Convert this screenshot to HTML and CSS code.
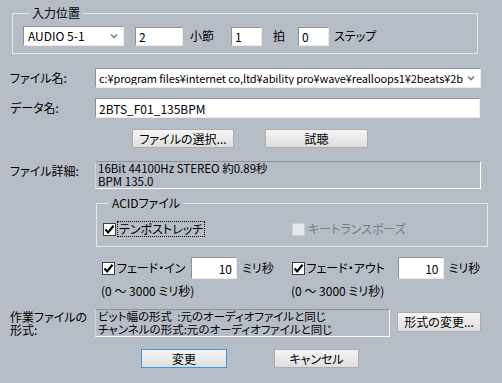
FILE: index.html
```html
<!DOCTYPE html>
<html lang="ja">
<head>
    <meta charset="UTF-8">
    <title>ファイルの挿入</title>
    <link rel="stylesheet" href="styles.css">
</head>
<body>
    <!-- 入力位置 -->
    <fieldset class="group group-pos">
        <legend>入力位置</legend>
        <div class="pos-row">
            <div class="select select-track">
                <span class="select-value">AUDIO 5-1</span>
                <svg class="chevron" width="8" height="6" viewBox="0 0 8 6"><path d="M1 1.5 L4 4.5 L7 1.5" fill="none" stroke="#7c8187" stroke-width="1.6"/></svg>
            </div>
            <input class="field field-bar" type="text" value="2">
            <span class="unit unit-bar">小節</span>
            <input class="field field-beat" type="text" value="1">
            <span class="unit unit-beat">拍</span>
            <input class="field field-step" type="text" value="0">
            <span class="unit">ステップ</span>
        </div>
    </fieldset>

    <!-- ファイル名 / データ名 -->
    <div class="row row-file">
        <label class="row-label">ファイル名:</label>
        <div class="select select-file">
            <span class="select-value">c:¥program files¥internet co,ltd¥ability pro¥wave¥realloops1¥2beats¥2b</span>
            <svg class="chevron" width="8" height="6" viewBox="0 0 8 6"><path d="M1 1.5 L4 4.5 L7 1.5" fill="none" stroke="#7c8187" stroke-width="1.6"/></svg>
        </div>
    </div>
    <div class="row row-data">
        <label class="row-label">データ名:</label>
        <input class="field field-data" type="text" value="2BTS_F01_135BPM">
    </div>

    <div class="row row-actions">
        <button class="btn btn-browse">ファイルの選択...</button>
        <button class="btn btn-listen">試聴</button>
    </div>

    <!-- ファイル詳細 -->
    <div class="row row-detail">
        <label class="row-label">ファイル詳細:</label>
        <div class="info info-detail">16Bit 44100Hz STEREO 約0.89秒<br>BPM 135.0</div>
    </div>

    <fieldset class="group group-acid">
        <legend>ACIDファイル</legend>
        <div class="acid-row">
            <span class="check-col">
                <span class="check is-checked"><svg width="11" height="11" viewBox="0 0 11 11"><path d="M1.5 5.5 L4.2 8.4 L9.5 1.8" fill="none" stroke="#000" stroke-width="2.2"/></svg></span>
                <span class="check-text focused">テンポストレッチ</span>
            </span>
            <span class="check-col disabled">
                <span class="check is-disabled"></span>
                <span class="check-text">キートランスポーズ</span>
            </span>
        </div>
    </fieldset>

    <!-- フェード -->
    <div class="row row-fade">
        <div class="fade-col">
            <span class="check is-checked"><svg width="11" height="11" viewBox="0 0 11 11"><path d="M1.5 5.5 L4.2 8.4 L9.5 1.8" fill="none" stroke="#000" stroke-width="2.2"/></svg></span>
            <span class="check-text fade-name">フェード・イン</span>
            <input class="field field-ms" type="text" value="10">
            <span class="unit">ミリ秒</span>
        </div>
        <div class="fade-col">
            <span class="check is-checked"><svg width="11" height="11" viewBox="0 0 11 11"><path d="M1.5 5.5 L4.2 8.4 L9.5 1.8" fill="none" stroke="#000" stroke-width="2.2"/></svg></span>
            <span class="check-text fade-name">フェード・アウト</span>
            <input class="field field-ms" type="text" value="10">
            <span class="unit">ミリ秒</span>
        </div>
    </div>
    <div class="row row-range">
        <span class="range">(0 〜 3000 ミリ秒)</span>
        <span class="range">(0 〜 3000 ミリ秒)</span>
    </div>

    <!-- 作業ファイルの形式 -->
    <div class="row row-format">
        <label class="row-label format-label">作業ファイルの<br>形式:</label>
        <div class="info info-format">ビット幅の形式&nbsp;&nbsp;:元のオーディオファイルと同じ<br>チャンネルの形式:元のオーディオファイルと同じ</div>
        <button class="btn btn-format">形式の変更...</button>
    </div>

    <div class="row row-footer">
        <button class="btn btn-ok">変更</button>
        <button class="btn btn-cancel">キャンセル</button>
    </div>
</body>
</html>
```

FILE: styles.css
```css
:root {
    --bg: #b6bdc7;
    --group-line: #e3e6eb;
    --sunken: #8e939a;
    --text: #000;
    --muted: #767c84;
    --font: "Noto Sans CJK JP", "Noto Sans", sans-serif;
}

* {
    box-sizing: border-box;
    margin: 0;
    padding: 0;
}

body {
    width: 502px;
    height: 383px;
    overflow: hidden;
    padding: 6px 21px 0 10px;
    background: var(--bg);
    color: var(--text);
    font-family: var(--font);
    font-size: 12px;
    line-height: 14px;
    font-feature-settings: "palt";
}

/* Group boxes */
.group {
    border: 1px solid var(--group-line);
}

.group legend {
    line-height: 14px;
    padding: 0 3px;
    margin-left: 6px;
    font-size: 12px;
}

.group-pos {
    margin: 0 3px 0 2px;
    padding: 6px 10px 7px;
}

.pos-row {
    display: flex;
    align-items: center;
    height: 20px;
}

/* Inputs */
.field {
    height: 19px;
    border: 1px solid #e9ebee;
    border-top-color: var(--sunken);
    border-left-color: var(--sunken);
    background: #fff;
    font-family: var(--font);
    font-size: 12px;
    padding: 0 3px;
    color: var(--text);
    outline: none;
}

.select {
    display: flex;
    align-items: center;
    height: 20px;
    background: #fff;
    border: 1px solid #e9ebee;
    border-top-color: var(--sunken);
    border-left-color: var(--sunken);
    padding: 0 5px 0 3px;
}

.select-value {
    flex: 1;
    white-space: nowrap;
}

.chevron {
    flex: none;
    margin-left: 4px;
}

.select-track {
    width: 101px;
    margin-right: 11px;
    padding-left: 4px;
}

.select-file .select-value {
    font-size: 11px;
    letter-spacing: -0.1px;
    overflow: hidden;
}

.field-bar { width: 48px; }
.field-beat { width: 31px; }
.field-step { width: 31px; }

.unit-bar { margin: 0 17px 0 7px; }
.unit-beat { margin: 0 13px 0 11px; }
.field-step + .unit { margin-left: 5px; }

/* Label rows */
.row {
    display: flex;
    align-items: center;
}

.row-label {
    width: 85px;
    flex: none;
}

.row-file { margin-top: 14px; }
.select-file { width: 386px; }

.row-data { margin-top: 10px; }
.field-data { width: 385px; height: 20px; }

.row-actions {
    margin-top: 11px;
    padding-left: 122px;
    gap: 31px;
}

/* Buttons */
.btn {
    height: 19px;
    border: 1px solid #adadad;
    background: linear-gradient(#f5f5f5, #dedede);
    font-family: var(--font);
    font-size: 12px;
    line-height: 14px;
    color: var(--text);
    font-feature-settings: "palt";
}

.btn-browse { width: 102px; }
.btn-listen { width: 103px; }

/* Info boxes */
.info {
    border: 1px solid #fff;
    border-top-color: var(--sunken);
    border-left-color: #d2d6dc;
    font-size: 11.5px;
    line-height: 13px;
    padding: 0 2px;
    white-space: nowrap;
    overflow: hidden;
}

.row-detail {
    margin-top: 13px;
    align-items: flex-start;
}

.row-detail .row-label { margin-top: 3px; }

.info-detail {
    width: 386px;
    height: 28px;
}

/* ACID */
.group-acid {
    margin: 7px 0 0 86px;
    padding: 11px 6px 9px;
}

.acid-row {
    display: flex;
    align-items: center;
    height: 16px;
}

.check-col {
    display: flex;
    align-items: center;
    width: 189px;
}

.check {
    width: 13px;
    height: 13px;
    flex: none;
    display: flex;
    align-items: center;
    justify-content: center;
    background: #fff;
    border: 1px solid #3b3e42;
}

.check.is-disabled {
    background: #e6e7e9;
    border-color: #c9ccd0;
}

.check-text {
    margin-left: 2px;
}

.focused {
    outline: 1px dotted #000;
    outline-offset: 0;
    padding: 0 1px;
}

.disabled .check-text {
    color: var(--muted);
    margin-left: 3px;
}

/* Fade */
.row-fade {
    margin-top: 10px;
    padding-left: 92px;
    height: 22px;
}

.fade-col {
    display: flex;
    align-items: center;
    width: 190px;
}

.fade-name {
    width: 74px;
}

.field-ms {
    width: 46px;
    height: 22px;
    text-align: right;
    padding-right: 4px;
    margin-right: 5px;
}

.fade-col + .fade-col .fade-name { width: 91px; }

.row-range {
    margin-top: 5px;
    padding-left: 91px;
}

.range { width: 191px; }

/* Format */
.row-format {
    margin-top: 11px;
    align-items: flex-start;
}

.format-label {
    margin-top: 1px;
    line-height: 13px;
}

.info-format {
    width: 296px;
    height: 28px;
}

.btn-format {
    width: 84px;
    height: 20px;
    margin: 3px 0 0 7px;
}

.row-footer {
    margin-top: 12px;
    padding-left: 131px;
    gap: 47px;
}

.btn-ok {
    width: 86px;
    height: 19px;
    border-color: #3b97e8;
}

.btn-cancel {
    width: 85px;
    height: 19px;
}
```
